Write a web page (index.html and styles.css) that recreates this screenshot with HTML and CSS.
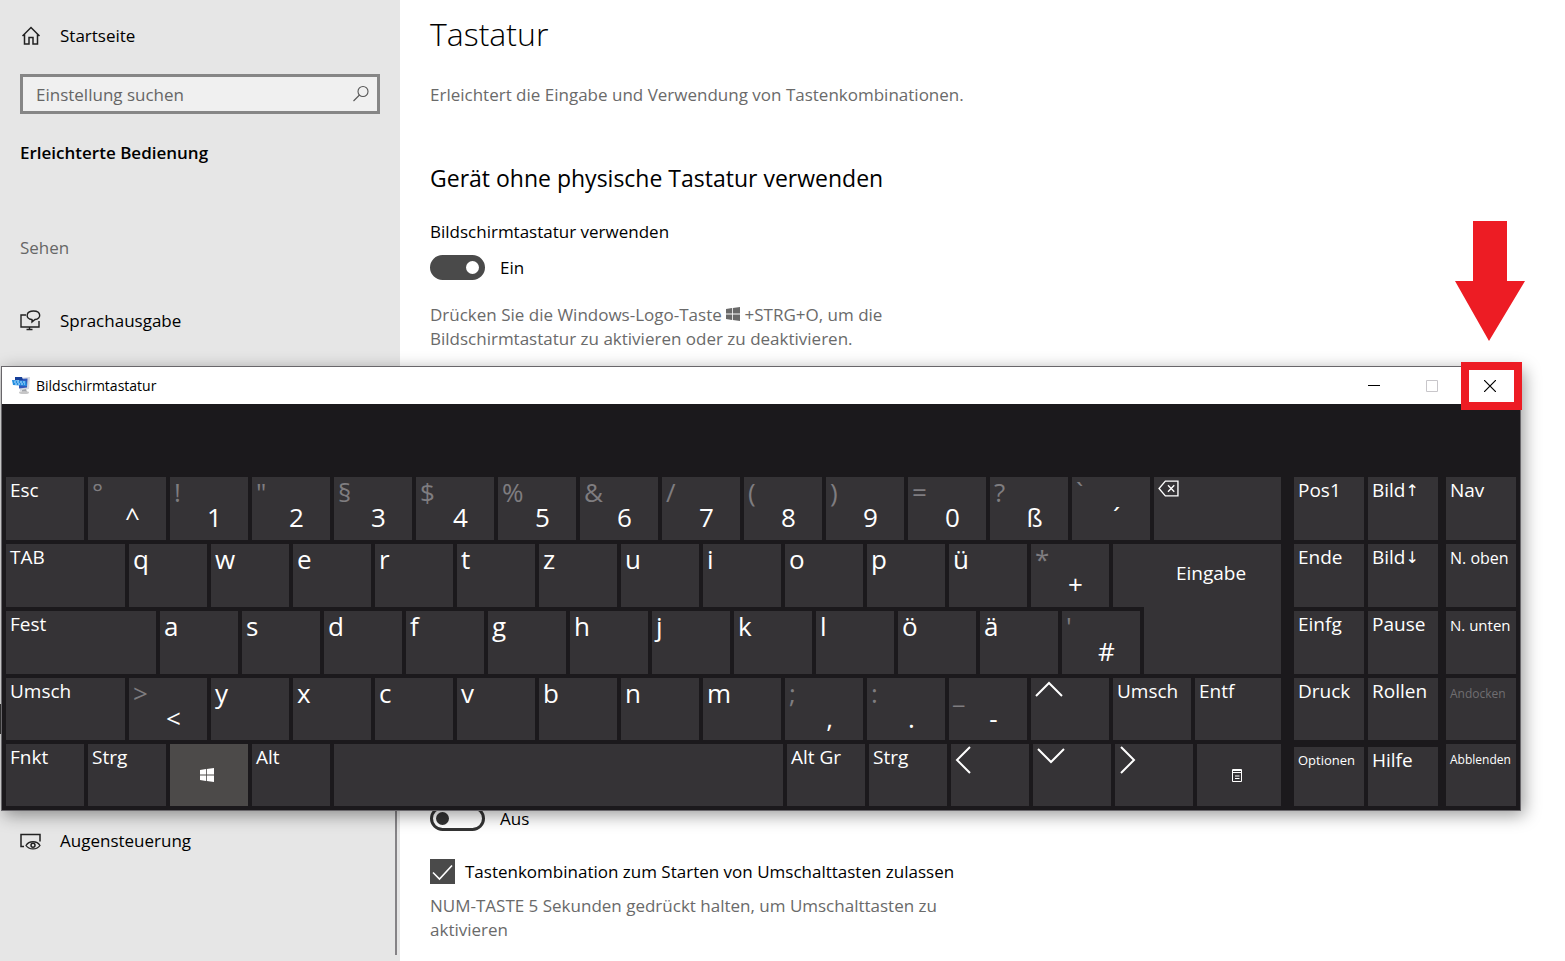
FILE: index.html
```
<!DOCTYPE html>
<html lang="de">
<head>
<meta charset="utf-8">
<title>Tastatur</title>
<link rel="stylesheet" href="styles.css">
</head>
<body>
<div class="settings">
  <nav class="sidebar" aria-label="Einstellungen">
    <a class="nav-item" href="#start">
      <svg class="nav-icon" viewBox="0 0 22 22"><path d="M2.500 11 11 2.500l8.500 8.500M4.500 9.500v9.500h4.500V12.500h4v6.500h4.500V9.500" fill="none" stroke="currentColor" stroke-width="1.500"/></svg>
      <span>Startseite</span>
    </a>
    <form class="search">
      <input type="search" aria-label="Einstellung suchen" placeholder="Einstellung suchen">
      <svg class="search-icon" viewBox="0 0 18 18"><circle cx="11" cy="6.500" r="5" fill="none" stroke="currentColor" stroke-width="1.100"/><path d="M7.500 10 1.500 16" stroke="currentColor" stroke-width="1.100"/></svg>
    </form>
    <h2 class="side-title">Erleichterte Bedienung</h2>
    <h3 class="side-group">Sehen</h3>
    <a class="nav-item" href="#sprachausgabe">
      <svg class="nav-icon" viewBox="0 0 22 22"><path d="M6 5H1v12h18v-6M6.500 19.500h6M9.500 17v2.500" fill="none" stroke="currentColor" stroke-width="1.400"/><path d="M9.500 9C6 7 6 1 13.500 1c8 0 8 8 1.500 8.500l-3 2.500V9.500z" fill="none" stroke="currentColor" stroke-width="1.400"/></svg>
      <span>Sprachausgabe</span>
    </a>
    <span class="nav-marker"></span>
    <a class="nav-item nav-item-eye" href="#augensteuerung">
      <svg class="nav-icon" viewBox="0 0 22 22"><path d="M4 16.500H1v-12h19v7" fill="none" stroke="currentColor" stroke-width="1.500"/><path d="M6 15.500c3-5 11-5 14 0-3 4.500-11 4.500-14 0z" fill="none" stroke="currentColor" stroke-width="1.300"/><circle cx="13" cy="15.300" r="2" fill="none" stroke="currentColor" stroke-width="1.500"/></svg>
      <span>Augensteuerung</span>
    </a>
    <span class="scroll-thumb"></span>
  </nav>
  <main class="content">
    <h1>Tastatur</h1>
    <p class="intro">Erleichtert die Eingabe und Verwendung von Tastenkombinationen.</p>
    <h2 class="section-title">Gerät ohne physische Tastatur verwenden</h2>
    <label class="switch-label" for="osk">Bildschirmtastatur verwenden</label>
    <div class="switch-row"><input class="switch" id="osk" type="checkbox" role="switch" checked><span>Ein</span></div>
    <p class="hint">Drücken Sie die Windows-Logo-Taste <svg class="win-inline" viewBox="0 0 14 14"><path d="M0 2 6 1v5.600H0zM6.800.9 14 0v6.600H6.800zM0 7.400h6V13l-6-1zM6.800 7.400H14V14l-7.200-1z" fill="currentColor"/></svg> <span>+STRG+O, um die</span><br><span>Bildschirmtastatur zu aktivieren oder zu deaktivieren.</span></p>
    <div class="switch-row switch-row-lower"><input class="switch" type="checkbox" role="switch" aria-label="Umschalttasten"><span>Aus</span></div>
    <label class="check-row">
      <span class="check-box">
        <input type="checkbox" checked>
        <svg viewBox="0 0 25 25"><path d="m3 13.500 6.500 6.500L22 6.500" fill="none" stroke="#fff" stroke-width="1.600"/></svg>
      </span>
      <span>Tastenkombination zum Starten von Umschalttasten zulassen</span>
    </label>
    <p class="hint">NUM-TASTE 5 Sekunden gedrückt halten, um Umschalttasten zu aktivieren</p>
  </main>
</div>

<section class="osk" aria-label="Bildschirmtastatur">
  <header class="titlebar">
    <svg class="app-icon" viewBox="0 0 20 20"><path d="m8 2 11-1-1 12-9 2z" fill="#d3d7e0"/><path d="m8 3 8.500-.5-.5 9-8 1z" fill="#3156b9"/><path d="m11 14 4-1 1 3-5 1z" fill="#a3a5aa"/><ellipse cx="13" cy="16.500" rx="5" ry="1.500" fill="#c6c6c7"/><path d="M4 1h7l1 3H4z" fill="#163f99"/><path d="m1 4 14 1 1 5-14-1z" fill="#238de0"/><path d="M3 6h11M4 8h10" stroke="#bfe2ff" stroke-width="1" stroke-dasharray="2 1"/></svg>
    <span class="title">Bildschirmtastatur</span>
    <button class="win-btn" aria-label="Minimieren"><svg viewBox="0 0 12 12"><path d="M0 5.500h12" stroke="#000"/></svg></button>
    <button class="win-btn" aria-label="Maximieren" disabled><svg viewBox="0 0 12 12"><path d="M.5.5h11v11H.5z" fill="none" stroke="#c8c6ca"/></svg></button>
    <button class="win-btn" aria-label="Schließen"><svg viewBox="0 0 12 12"><path d="m0 0 12 12M12 0 0 12" stroke="#000" stroke-width="1.200"/></svg></button>
  </header>
  <div class="keys">
    <div class="cluster cluster-main">
      <div class="row row-1">
        <button class="key">Esc</button>
        <button class="key dual"><span>°</span><b>^</b></button>
        <button class="key dual"><span>!</span><b>1</b></button>
        <button class="key dual"><span>"</span><b>2</b></button>
        <button class="key dual"><span>§</span><b>3</b></button>
        <button class="key dual"><span>$</span><b>4</b></button>
        <button class="key dual"><span>%</span><b>5</b></button>
        <button class="key dual"><span>&amp;</span><b>6</b></button>
        <button class="key dual"><span>/</span><b>7</b></button>
        <button class="key dual"><span>(</span><b>8</b></button>
        <button class="key dual"><span>)</span><b>9</b></button>
        <button class="key dual"><span>=</span><b>0</b></button>
        <button class="key dual"><span>?</span><b>ß</b></button>
        <button class="key dual"><span>`</span><b>´</b></button>
        <button class="key" aria-label="Rücktaste"><svg class="ico-back" viewBox="0 0 20 16"><path d="M7 1h12v14H7L1 8zM9.500 5l6 6M15.500 5l-6 6" fill="none" stroke="#fff" stroke-width="1.300"/></svg></button>
      </div>
      <div class="row row-2">
        <button class="key">TAB</button>
        <button class="key letter">q</button>
        <button class="key letter">w</button>
        <button class="key letter">e</button>
        <button class="key letter">r</button>
        <button class="key letter">t</button>
        <button class="key letter">z</button>
        <button class="key letter">u</button>
        <button class="key letter">i</button>
        <button class="key letter">o</button>
        <button class="key letter">p</button>
        <button class="key letter">ü</button>
        <button class="key dual"><span>*</span><b>+</b></button>
        <button class="key enter">Eingabe</button>
      </div>
      <div class="row row-3">
        <button class="key">Fest</button>
        <button class="key letter">a</button>
        <button class="key letter">s</button>
        <button class="key letter">d</button>
        <button class="key letter">f</button>
        <button class="key letter">g</button>
        <button class="key letter">h</button>
        <button class="key letter">j</button>
        <button class="key letter">k</button>
        <button class="key letter">l</button>
        <button class="key letter">ö</button>
        <button class="key letter">ä</button>
        <button class="key dual"><span>'</span><b>#</b></button>
      </div>
      <div class="row row-4">
        <button class="key">Umsch</button>
        <button class="key dual"><span>&gt;</span><b>&lt;</b></button>
        <button class="key letter">y</button>
        <button class="key letter">x</button>
        <button class="key letter">c</button>
        <button class="key letter">v</button>
        <button class="key letter">b</button>
        <button class="key letter">n</button>
        <button class="key letter">m</button>
        <button class="key dual"><span>;</span><b>,</b></button>
        <button class="key dual"><span>:</span><b>.</b></button>
        <button class="key dual"><span>_</span><b>-</b></button>
        <button class="key" aria-label="Nach oben"><svg class="ico-arrow" viewBox="0 0 28 28"><path d="M1 16 14 3l13 13" fill="none" stroke="#fff" stroke-width="2"/></svg></button>
        <button class="key">Umsch</button>
        <button class="key">Entf</button>
      </div>
      <div class="row row-5">
        <button class="key">Fnkt</button>
        <button class="key">Strg</button>
        <button class="key centered pressed" aria-label="Windows"><svg class="ico-win" viewBox="0 0 14 14"><path d="M0 2 6 1v5.600H0zM6.800.9 14 0v6.600H6.800zM0 7.400h6V13l-6-1zM6.800 7.400H14V14l-7.200-1z" fill="#fff"/></svg></button>
        <button class="key">Alt</button>
        <button class="key" aria-label="Leertaste"></button>
        <button class="key">Alt Gr</button>
        <button class="key">Strg</button>
        <button class="key" aria-label="Nach links"><svg class="ico-arrow" viewBox="0 0 28 28"><path d="M15 1 2 14l13 13" fill="none" stroke="#fff" stroke-width="2"/></svg></button>
        <button class="key" aria-label="Nach unten"><svg class="ico-arrow" viewBox="0 0 28 28"><path d="m1 3 13 13L27 3" fill="none" stroke="#fff" stroke-width="2"/></svg></button>
        <button class="key" aria-label="Nach rechts"><svg class="ico-arrow" viewBox="0 0 28 28"><path d="m2 1 13 13L2 27" fill="none" stroke="#fff" stroke-width="2"/></svg></button>
        <button class="key centered" aria-label="Menü"><svg class="ico-menu" viewBox="0 0 10 13"><path d="M.5.5h9v12h-9zM0 1.500h10M0 3.500h10M3 7h4.500M3 9.500h4.500" fill="none" stroke="#fff"/></svg></button>
      </div>
    </div>
    <div class="cluster cluster-nav">
      <div class="row row-pair"><button class="key">Pos1</button><button class="key">Bild<span class="arr">↑</span></button></div>
      <div class="row row-pair"><button class="key">Ende</button><button class="key">Bild<span class="arr">↓</span></button></div>
      <div class="row row-pair"><button class="key">Einfg</button><button class="key">Pause</button></div>
      <div class="row row-pair"><button class="key">Druck</button><button class="key">Rollen</button></div>
      <div class="row row-pair row-low"><button class="key t13">Optionen</button><button class="key">Hilfe</button></div>
    </div>
    <div class="cluster cluster-side">
      <div class="row"><button class="key">Nav</button></div>
      <div class="row"><button class="key t16">N. oben</button></div>
      <div class="row"><button class="key t15">N. unten</button></div>
      <div class="row"><button class="key t12" disabled>Andocken</button></div>
      <div class="row"><button class="key t12">Abblenden</button></div>
    </div>
  </div>
</section>

<svg class="pointer" viewBox="0 0 70 120"><path d="M18 0h34v60h18L34 120 0 60h18z" fill="#ed1c24"/></svg>
<div class="highlight"></div>
</body>
</html>
```
FILE: styles.css
```
* { box-sizing: border-box; }
body {
  margin: 0;
  background: #fff;
  color: #000;
  font: 17px/24px "Open Sans", "Noto Sans", sans-serif;
}
h1, h2, h3, p { margin: 0; font-weight: 400; }
button, input { font: inherit; margin: 0; }

.settings { display: flex; min-height: 100vh; }
.sidebar {
  position: relative;
  flex: 0 0 400px;
  padding: 24px 20px;
  background: #e6e6e6;
}
.nav-item {
  display: flex;
  align-items: center;
  gap: 18px;
  color: #000;
  text-decoration: none;
}
.nav-icon { width: 22px; height: 22px; color: #222; }
.search {
  display: flex;
  align-items: center;
  height: 40px;
  margin: 26px 0 27px;
  padding: 0 7px 0 13px;
  background: #f0f0f0;
  border: 3px solid #868686;
}
.search input {
  flex: 1;
  min-width: 0;
  padding: 2px 0 0;
  border: 0;
  outline: 0;
  background: none;
}
.search input::placeholder { color: #666; opacity: 1; }
.search-icon { width: 18px; height: 18px; color: #555; }
.side-title { font-size: 17px; font-weight: 600; }
.side-group { margin: 71px 0 49px; font-size: 17px; color: #666; }
.nav-item-eye { margin-top: 496px; }
.nav-marker {
  position: absolute;
  left: 0;
  top: 704px;
  width: 5px;
  height: 30px;
  background: #333;
}
.scroll-thumb {
  position: absolute;
  right: 3px;
  top: 400px;
  bottom: 6px;
  width: 2px;
  background: #858386;
}

.content { flex: 1; padding: 10px 30px; }
h1 { font-size: 32px; line-height: 48px; font-weight: 300; }
.intro { margin-top: 25px; color: #6a6a6a; }
.section-title { margin-top: 54px; font-size: 23px; line-height: 34px; }
.switch-label { display: block; margin-top: 25px; }
.switch-row { display: flex; align-items: center; gap: 15px; margin-top: 11px; }
.switch {
  appearance: none;
  display: flex;
  align-items: center;
  width: 55px;
  height: 25px;
  padding: 0 3px;
  border: 3px solid #333;
  border-radius: 13px;
  background: #fff;
}
.switch::before {
  content: "";
  width: 13px;
  height: 13px;
  border-radius: 50%;
  background: #333;
}
.switch:checked { justify-content: flex-end; background: #4a4a4a; border-color: #4a4a4a; }
.switch:checked::before { background: #fff; }
.hint { max-width: 510px; margin-top: 23px; color: #6a6a6a; }
.win-inline { width: 14px; height: 14px; }
.switch-row-lower { margin-top: 455px; }
.check-row { display: flex; align-items: center; gap: 10px; margin-top: 28px; }
.check-box { display: grid; }
.check-box > * { grid-area: 1 / 1; width: 25px; height: 25px; }
.check-box input { appearance: none; background: #4a4a4a; }
.check-row + .hint { margin-top: 10px; }

.osk {
  position: absolute;
  left: 1px;
  right: 44px;
  top: 366px;
  border: 1px solid #68666a;
  background: #1b191c;
  box-shadow: 3px 4px 16px rgba(0, 0, 0, .4);
}
.titlebar {
  display: flex;
  align-items: center;
  height: 37px;
  padding: 0 1px 0 9px;
  background: #fff;
}
.app-icon { width: 20px; height: 20px; }
.title { flex: 1; padding-left: 5px; font-size: 14px; }
.win-btn {
  display: grid;
  place-items: center;
  width: 58px;
  height: 37px;
  padding: 0;
  border: 0;
  background: none;
}
.win-btn svg { width: 12px; height: 12px; }

.keys {
  display: grid;
  grid-template-columns: 1275fr 13px 144fr 8px 70fr;
  padding: 73px 4px 4px;
}
.cluster {
  display: grid;
  grid-template-rows: 63px 63px 63px 62px 62px;
  gap: 4px;
  min-width: 0;
}
.cluster-nav { grid-column: 3; }
.cluster-side { grid-column: 5; }

/* Column widths are proportional to the key sizes. */
.row { display: grid; gap: 4px; min-width: 0; }
.row-1 { grid-template-columns: repeat(14, 78fr) 127fr; }
.row-2 { grid-template-columns: 119fr repeat(12, 78fr) 168fr; }
.row-3 { grid-template-columns: 150fr repeat(12, 78fr) 137fr; }
.row-4 { grid-template-columns: 119fr repeat(13, 78fr) 86fr; }
.row-5 { grid-template-columns: repeat(4, 78fr) 449fr repeat(5, 78fr) 84fr; }
.row-pair { grid-template-columns: 1fr 1fr; }
.row-low { padding-top: 3px; }
.key {
  display: flex;
  align-items: flex-start;
  min-width: 0;
  padding: 0 0 0 4px;
  border: 0;
  background: #353336;
  color: #fff;
  font-size: 19px;
  line-height: 26px;
  text-align: left;
  white-space: nowrap;
}
.letter, .dual { font-size: 26px; line-height: 30px; }
.dual { display: grid; grid-template-columns: 1fr; }
.dual span, .dual b { grid-area: 1 / 1; font-weight: 400; }
.dual span { color: #7f7d80; }
.dual b { padding: 25px 0 0 7px; text-align: center; }
.enter { position: relative; justify-content: center; padding: 16px 0 0 28px; }
.enter::after {
  content: "";
  position: absolute;
  left: 31px;
  right: 0;
  top: 100%;
  height: 67px;
  background: #353336;
}
.centered { align-items: center; justify-content: center; padding: 0 4px 0 0; }
.pressed { background: #4c4a49; }
.t16 { font-size: 16px; line-height: 28px; }
.t15 { font-size: 15px; line-height: 28px; }
.t13 { font-size: 13px; line-height: 26px; }
.t12 { font-size: 12px; line-height: 32px; }
.key:disabled { color: #706e71; }
.arr { font-family: "Noto Sans", "DejaVu Sans", sans-serif; font-size: 16px; }
.ico-back { width: 21px; height: 17px; margin-top: 3px; }
.ico-arrow { width: 28px; height: 28px; margin-top: 2px; }
.ico-win { width: 14px; height: 14px; }
.ico-menu { width: 10px; height: 13px; }

.pointer { position: absolute; right: 40px; top: 221px; width: 70px; height: 120px; }
.highlight {
  position: absolute;
  right: 43px;
  top: 362px;
  width: 61px;
  height: 48px;
  border: 8px solid #ed1c24;
}
```
